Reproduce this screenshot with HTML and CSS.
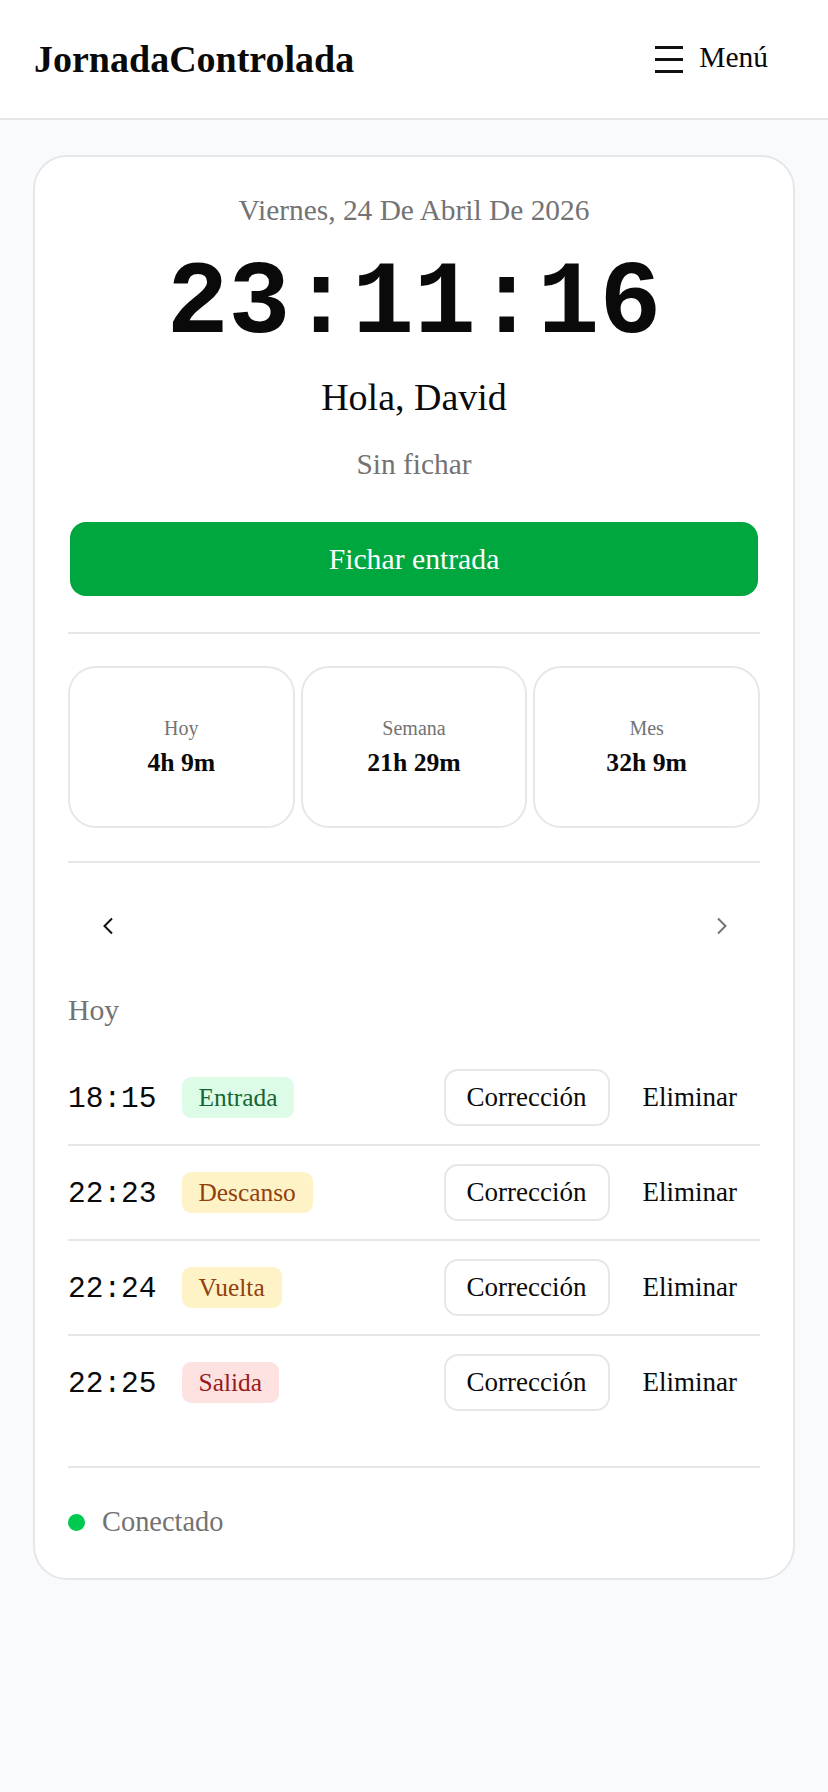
FILE: index.html
```html
<!DOCTYPE html>
<html lang="es">
<head>
  <meta charset="UTF-8" />
  <meta name="viewport" content="width=device-width, initial-scale=1.0"/>
  <title>JornadaControlada</title>
  <link rel="stylesheet" href="styles.css">
</head>
<body>
  <header class="topbar">
    <div class="brand">JornadaControlada</div>
    <button class="menu-btn" type="button">
      <svg class="menu-icon" width="28" height="28" viewBox="0 0 28 28" aria-hidden="true">
        <rect x="0" y="0" width="28" height="3" fill="#111"/>
        <rect x="0" y="12" width="28" height="3" fill="#111"/>
        <rect x="0" y="24" width="28" height="3" fill="#111"/>
      </svg>
      <span>Menú</span>
    </button>
  </header>

  <main class="page">
    <section class="card">
      <div class="date">Viernes, 24 De Abril De 2026</div>
      <div class="clock">23:11:16</div>
      <div class="greeting">Hola, David</div>
      <div class="state">Sin fichar</div>

      <button class="punch-btn" type="button">Fichar entrada</button>

      <div class="divider"></div>

      <div class="stats">
        <div class="stat">
          <div class="stat-label">Hoy</div>
          <div class="stat-value">4h 9m</div>
        </div>
        <div class="stat">
          <div class="stat-label">Semana</div>
          <div class="stat-value">21h 29m</div>
        </div>
        <div class="stat">
          <div class="stat-label">Mes</div>
          <div class="stat-value">32h 9m</div>
        </div>
      </div>

      <div class="divider"></div>

      <div class="day-nav">
        <button class="nav-btn" type="button" aria-label="Día anterior">
          <svg width="12" height="18" viewBox="0 0 12 18"><path d="M10 1.5 L2.5 9 L10 16.5" fill="none" stroke="#111" stroke-width="2"/></svg>
        </button>
        <button class="nav-btn" type="button" aria-label="Día siguiente" disabled>
          <svg width="12" height="18" viewBox="0 0 12 18"><path d="M2 1.5 L9.5 9 L2 16.5" fill="none" stroke="#737373" stroke-width="2"/></svg>
        </button>
      </div>

      <h2 class="day-title">Hoy</h2>

      <ul class="entries" id="entries"></ul>

      <div class="divider bottom"></div>

      <div class="conn">
        <span class="dot"></span>
        <span>Conectado</span>
      </div>
    </section>
  </main>

  <script>
    const entries = [
      { time: '18:15', type: 'Entrada', kind: 'in' },
      { time: '22:23', type: 'Descanso', kind: 'pause' },
      { time: '22:24', type: 'Vuelta', kind: 'pause' },
      { time: '22:25', type: 'Salida', kind: 'out' }
    ];

    const list = document.getElementById('entries');
    entries.forEach(e => {
      const li = document.createElement('li');
      li.className = 'entry';
      li.innerHTML = `
        <span class="entry-time">${e.time}</span>
        <span class="badge badge-${e.kind}">${e.type}</span>
        <div class="entry-actions">
          <button class="btn-outline" type="button">Corrección</button>
          <button class="btn-plain" type="button">Eliminar</button>
        </div>
      `;
      list.appendChild(li);
    });
  </script>
</body>
</html>
```

FILE: styles.css
```css
body {
  margin: 0;
  background: #f9fafb;
  color: #0a0a0a;
  font-family: "Liberation Serif", "Times New Roman", serif;
}
button {
  font-family: inherit;
  color: inherit;
  background: none;
  cursor: pointer;
}
.topbar {
  height: 118px;
  background: #ffffff;
  border-bottom: 2px solid #e5e7eb;
  display: flex;
  align-items: center;
  justify-content: space-between;
  padding: 0 34px;
}
.brand {
  font-size: 38px;
  font-weight: bold;
}
.menu-btn {
  display: flex;
  align-items: center;
  gap: 16px;
  border: none;
  padding: 0 26px 4px 0;
  font-size: 29.5px;
}
.menu-icon {
  margin-top: 6px;
}
.page {
  padding: 35px 33px;
}
.card {
  background: #ffffff;
  border: 2px solid #e5e7eb;
  border-radius: 34px;
  padding: 36px 33px 33px;
}
.date {
  text-align: center;
  color: #737373;
  font-size: 29.4px;
  line-height: 34px;
}
.clock {
  margin-top: 26px;
  text-align: center;
  font-family: "Liberation Mono", "Courier New", monospace;
  font-weight: bold;
  font-size: 103px;
  line-height: 103px;
}
.greeting {
  margin-top: 19px;
  text-align: center;
  font-size: 38px;
  line-height: 44px;
}
.state {
  margin-top: 28px;
  text-align: center;
  color: #737373;
  font-size: 29.4px;
  line-height: 34px;
}
.punch-btn {
  display: block;
  width: calc(100% - 4px);
  margin: 41px 2px 0;
  height: 74px;
  border: none;
  border-radius: 16px;
  background: #00a63e;
  color: #ffffff;
  font-size: 29.7px;
}
.divider {
  height: 2px;
  background: #e5e7eb;
  margin-top: 36px;
}
.stats {
  margin-top: 32px;
  display: grid;
  grid-template-columns: repeat(3, 1fr);
  gap: 6px;
}
.stat {
  height: 158px;
  border: 2px solid #e5e7eb;
  border-radius: 28px;
  display: flex;
  flex-direction: column;
  align-items: center;
  justify-content: center;
  gap: 8px;
}
.stat-label {
  color: #737373;
  font-size: 20px;
  line-height: 23px;
}
.stat-value {
  font-weight: bold;
  font-size: 25.7px;
  line-height: 30px;
}
.stats + .divider {
  margin-top: 33px;
}
.day-nav {
  margin-top: 35px;
  height: 56px;
  display: flex;
  align-items: center;
  justify-content: space-between;
  padding: 0 32px 0 34px;
}
.nav-btn {
  border: none;
  padding: 0;
  display: flex;
}
.day-title {
  margin: 39px 0 0;
  color: #737373;
  font-weight: normal;
  font-size: 29.7px;
  line-height: 34px;
}
.entries {
  list-style: none;
  margin: 24px 0 0;
  padding: 0;
}
.entry {
  display: flex;
  align-items: center;
  gap: 25px;
  padding: 18px 0;
  border-bottom: 2px solid #e5e7eb;
}
.entry:last-child {
  border-bottom: none;
}
.entry-time {
  font-family: "Liberation Mono", "Courier New", monospace;
  font-size: 29.5px;
  line-height: 1;
  padding-top: 4px;
}
.badge {
  font-size: 25.4px;
  line-height: 41px;
  padding: 0 17px;
  border-radius: 9px;
}
.badge-in { background: #dcfce7; color: #166534; }
.badge-pause { background: #fef3c7; color: #92400e; }
.badge-out { background: #fee2e2; color: #991b1b; }
.entry-actions {
  margin-left: auto;
  display: flex;
  gap: 10px;
}
.btn-outline,
.btn-plain {
  height: 57px;
  padding: 0 21px;
  font-size: 27px;
  border-radius: 14px;
  border: 2px solid #e5e7eb;
  background: #ffffff;
}
.btn-plain {
  border-color: transparent;
}
.divider.bottom {
  margin-top: 37px;
}
.conn {
  margin-top: 31px;
  height: 46px;
  display: flex;
  align-items: center;
  gap: 17px;
  color: #737373;
  font-size: 28.4px;
}
.dot {
  width: 17px;
  height: 17px;
  border-radius: 50%;
  background: #00c950;
}
```
